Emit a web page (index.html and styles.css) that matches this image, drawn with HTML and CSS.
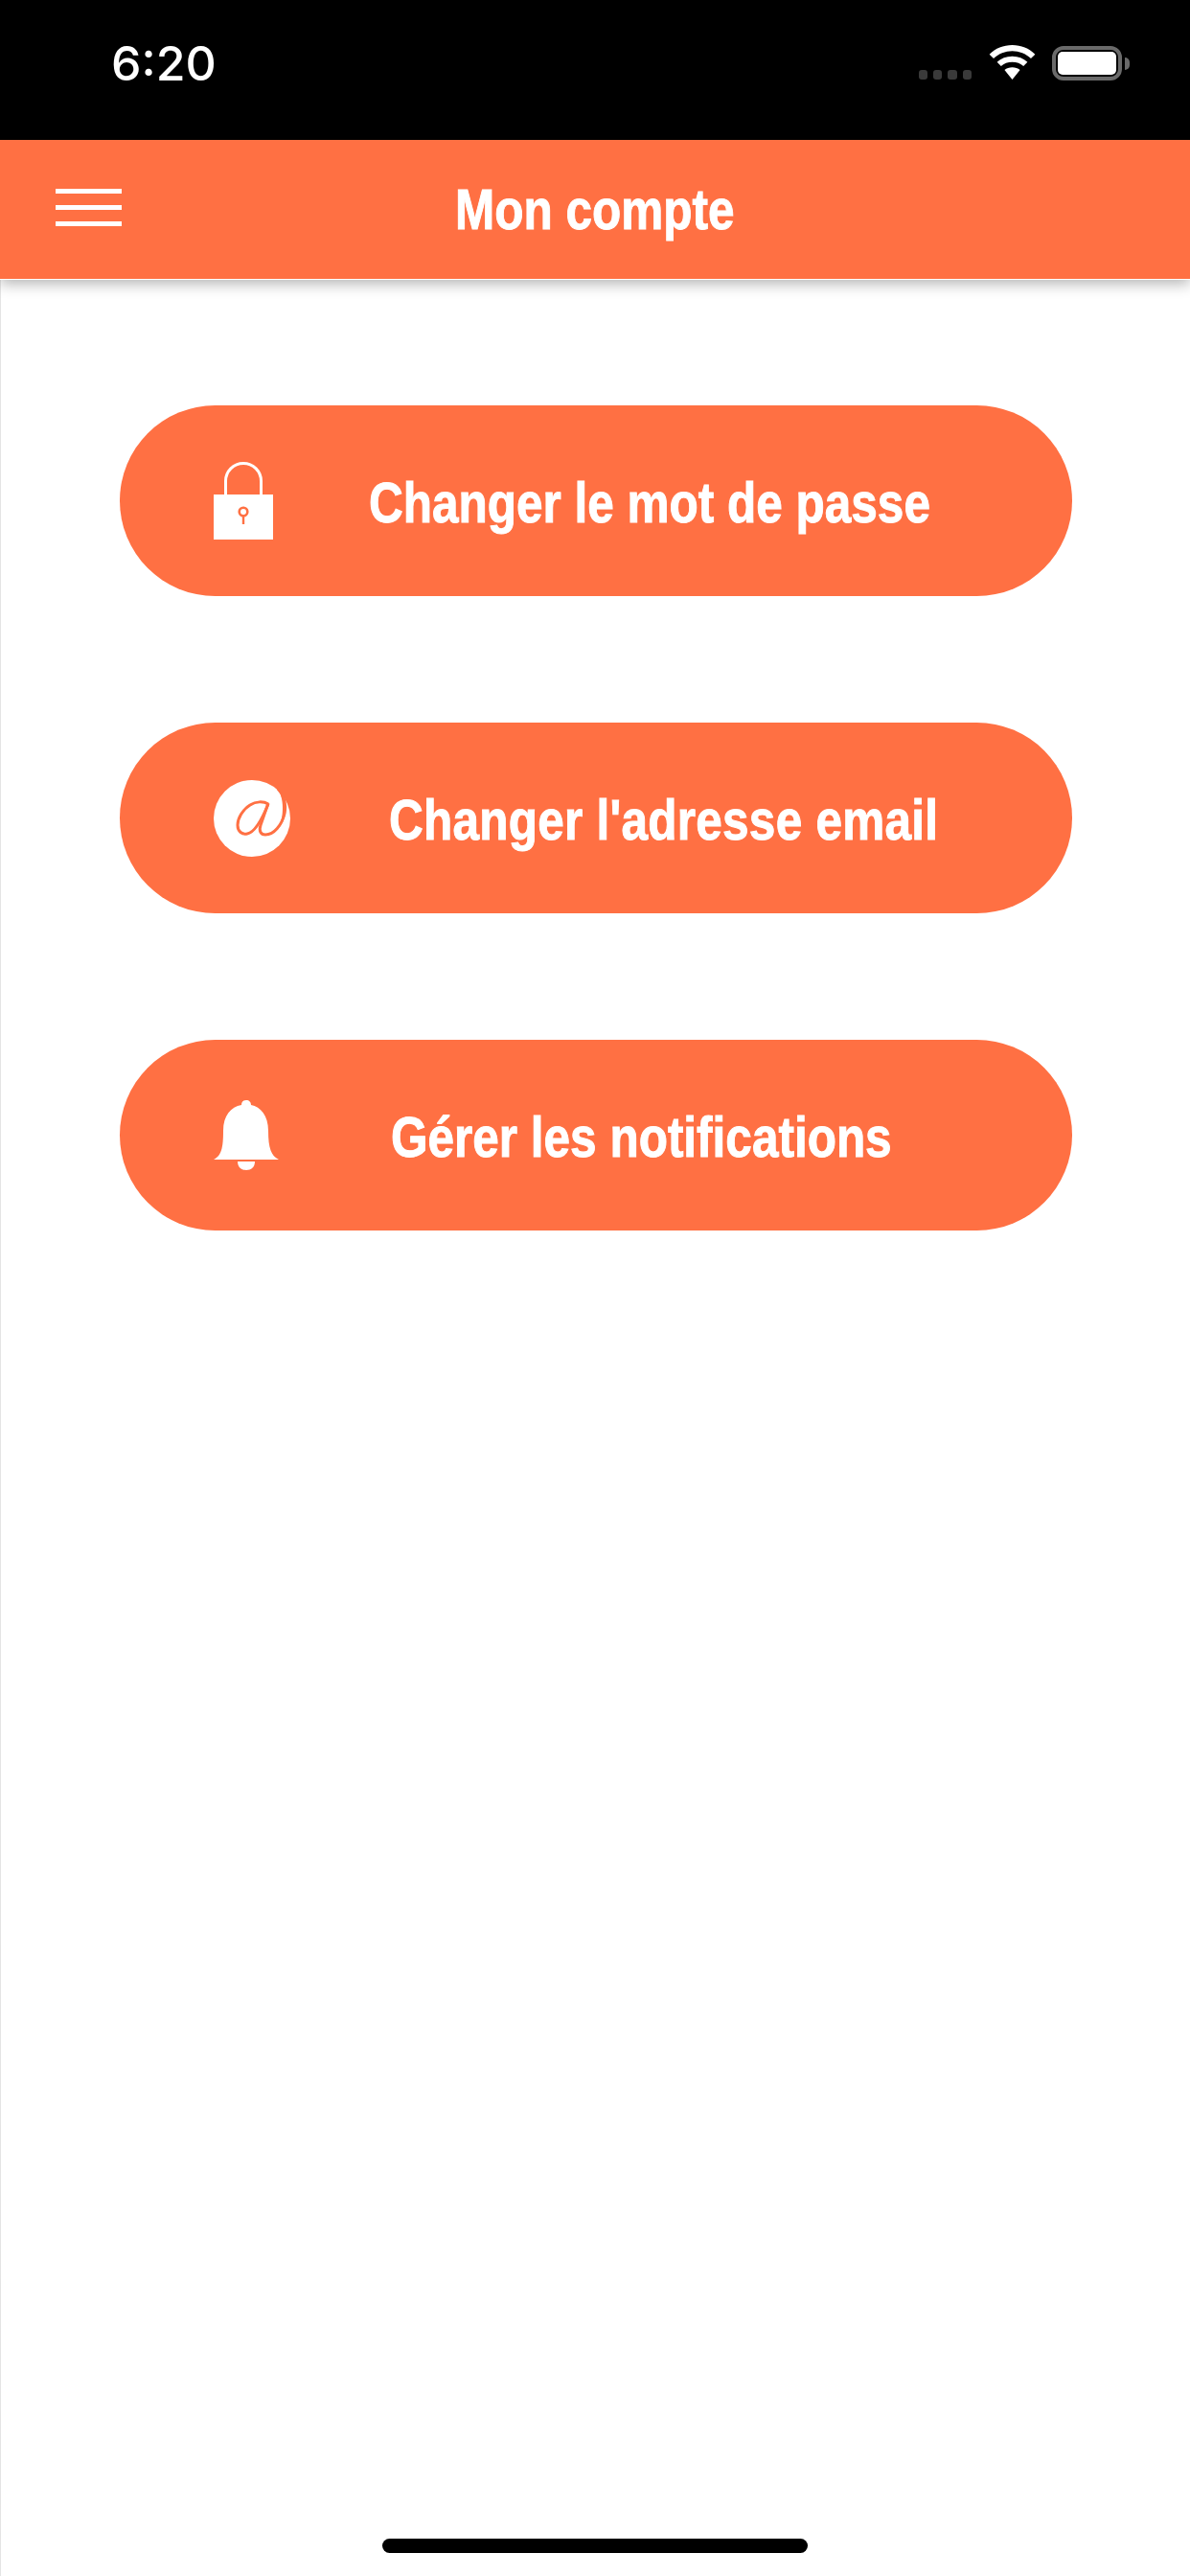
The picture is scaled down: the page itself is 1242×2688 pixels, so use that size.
FILE: index.html
```html
<!DOCTYPE html>
<html lang="fr">

<head>
    <meta charset="UTF-8">
    <meta name="viewport" content="width=device-width, initial-scale=1.0">
    <title>Mon compte</title>
    <link rel="stylesheet" href="styles.css">
</head>

<body>
    <div class="status-bar">
        <span class="status-time">6:20</span>
        <div class="status-icons">
            <div class="signal-dots">
                <span></span><span></span><span></span><span></span>
            </div>
            <svg class="wifi-icon" width="49" height="37" viewBox="0 0 50 38">
                <path d="M25 0C15.500 0 7 3.500 0.500 10L5 14.500C10.500 9.300 17.500 6.500 25 6.500S39.500 9.300 45 14.500L49.500 10C43 3.500 34.500 0 25 0Z" fill="#fff"/>
                <path d="M25 12C18.500 12 13 14.300 8.700 18.300L13 22.600C16 19.900 20.300 18.300 25 18.300S34 19.900 37 22.600L41.300 18.300C37 14.300 31.500 12 25 12Z" fill="#fff"/>
                <path d="M25 24C21.800 24 18.900 25 16.700 26.800L25 37L33.300 26.800C31.100 25 28.200 24 25 24Z" fill="#fff"/>
            </svg>
            <div class="battery">
                <div class="battery-body"><div class="battery-fill"></div></div>
                <div class="battery-cap"></div>
            </div>
        </div>
    </div>

    <header class="top-bar">
        <div class="menu-icon"><span></span><span></span><span></span></div>
        <h1>Mon compte</h1>
    </header>

    <main class="account-menu">
        <a class="account-btn" href="#">
            <svg class="btn-icon" width="62" height="81" viewBox="0 0 62 81">
                <path d="M12.500 35V20A18.500 18.500 0 0 1 49.500 20V35" fill="none" stroke="#fff" stroke-width="3"/>
                <rect x="0" y="34" width="62" height="47" fill="#fff"/>
                <circle cx="31" cy="52" r="4.300" fill="none" stroke="#ff7043" stroke-width="2.600"/>
                <rect x="29.800" y="56" width="2.400" height="9" fill="#ff7043"/>
            </svg>
            <span class="btn-label label-pass">Changer le mot de passe</span>
        </a>
        <a class="account-btn" href="#">
            <svg class="btn-icon" width="80" height="80" viewBox="0 0 80 80">
                <circle cx="40" cy="40" r="40" fill="#fff"/>
                <path d="M57 25C52 22 44 22 38 26C30 31 25 40 25 47C25 54 30 57 35 56C42 55 50 42 57 25" fill="none" stroke="#ff7043" stroke-width="3"/>
                <path d="M57 24L49 47C47 53 49 57 54 57C63 57 71 47 74 35C76 25 73 15 67 9" fill="none" stroke="#ff7043" stroke-width="3"/>
                <path d="M67 9C73 13 77 24 75 35C74 41 71 47 68 50C72 42 75 22 67 9Z" fill="#ff7043"/>
            </svg>
            <span class="btn-label label-email">Changer l'adresse email</span>
        </a>
        <a class="account-btn" href="#">
            <svg class="btn-icon" width="68" height="74" viewBox="0 0 68 74">
                <path d="M0 62C8 58 10 50 10 32C10 16 18 7 29 5C29 2 31 0 34 0S39 2 39 5C49 7 57 16 57 32C57 50 60 58 68 62Z" fill="#fff"/>
                <path d="M25 64H43C43 70 39 73 34 73S25 70 25 64Z" fill="#fff"/>
            </svg>
            <span class="btn-label label-notif">Gérer les notifications</span>
        </a>
    </main>

    <div class="home-indicator"></div>
</body>

</html>
```

FILE: styles.css
```css
body {
    font-family: "Liberation Sans", Arial, sans-serif;
    margin: 0;
    padding: 0;
    width: 1242px;
    height: 2688px;
    overflow: hidden;
    position: relative;
    background-color: #fff;
    box-shadow: inset 1px 0 0 #e4e4e4;
}

.status-bar {
    height: 146px;
    background-color: #000;
    display: flex;
    justify-content: space-between;
    align-items: flex-start;
    padding: 0 63px 0 116px;
    box-sizing: border-box;
}

.status-time {
    color: #fff;
    font-family: "Inter", "Liberation Sans", sans-serif;
    font-size: 50px;
    font-weight: 500;
    line-height: 50px;
    margin-top: 41px;
}

.status-icons {
    display: flex;
    align-items: flex-start;
    margin-top: 47px;
}

.signal-dots {
    display: flex;
    gap: 6px;
    margin-top: 26px;
    margin-right: 18px;
}

.signal-dots span {
    width: 9.300px;
    height: 10px;
    border-radius: 3px;
    background-color: #3a3a3a;
}

.wifi-icon {
    margin-right: 17px;
}

.battery {
    display: flex;
    align-items: center;
    margin-top: 1px;
}

.battery-body {
    width: 73px;
    height: 36px;
    border: 4px solid #6a6a6a;
    border-radius: 12px;
    padding: 2px;
    box-sizing: border-box;
}

.battery-fill {
    width: 100%;
    height: 100%;
    background-color: #fff;
    border-radius: 5px;
}

.battery-cap {
    width: 5px;
    height: 13px;
    margin-left: 3px;
    background-color: #6a6a6a;
    border-radius: 0 5px 5px 0;
}

.top-bar {
    height: 145px;
    background-color: #ff7043;
    display: flex;
    align-items: center;
    justify-content: center;
    position: relative;
    border-bottom: 1px solid #fff;
    box-shadow: 0 4px 14px rgba(0, 0, 0, 0.3);
}

/* no condensed face installed, so the bold is squeezed */
.top-bar h1 {
    margin: 0;
    color: #fff;
    font-size: 60px;
    font-weight: bold;
    -webkit-text-stroke: 1px #fff;
    transform: scaleX(0.825);
}

.menu-icon {
    position: absolute;
    left: 58px;
    top: 51px;
    width: 69px;
    display: flex;
    flex-direction: column;
    gap: 12px;
}

.menu-icon span {
    height: 5px;
    background-color: #fff;
}

.account-menu {
    display: flex;
    flex-direction: column;
    gap: 132px;
    padding: 131px 123px 0 125px;
}

.account-btn {
    height: 199px;
    border-radius: 100px;
    background-color: #ff7043;
    display: flex;
    align-items: center;
    color: #fff;
    text-decoration: none;
}

.btn-icon {
    flex: none;
    margin-left: 98px;
}

.btn-label {
    display: inline-block;
    padding-top: 4px;
    font-size: 60px;
    font-weight: bold;
    white-space: nowrap;
    -webkit-text-stroke: 1px #fff;
    transform: scaleX(0.825);
    transform-origin: left center;
}

.label-pass {
    margin-left: 100px;
}

.label-email {
    margin-left: 103px;
    letter-spacing: 0.3px;
}

.label-notif {
    margin-left: 117px;
}

.home-indicator {
    position: absolute;
    left: 399px;
    bottom: 24px;
    width: 444px;
    height: 15px;
    border-radius: 8px;
    background-color: #000;
}
```
